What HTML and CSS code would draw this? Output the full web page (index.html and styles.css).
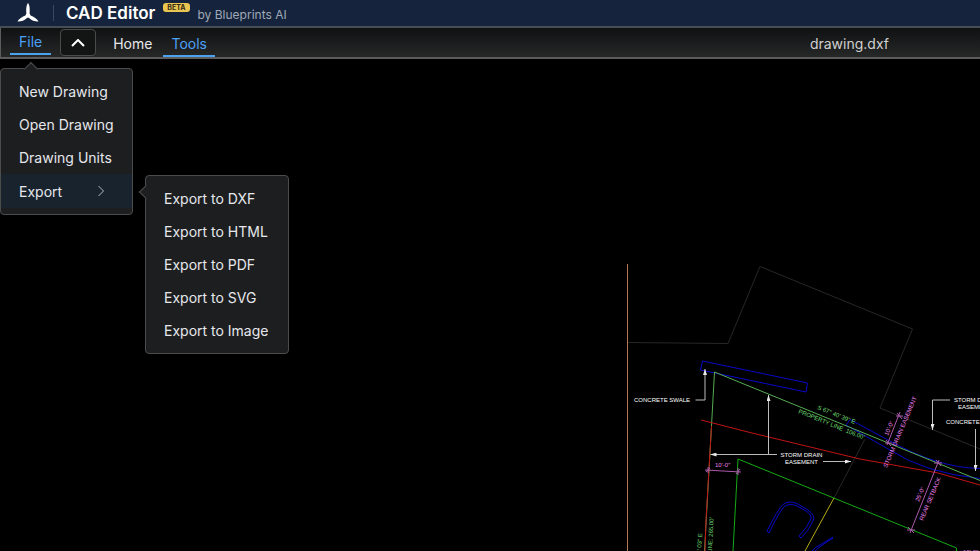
FILE: index.html
```
<!DOCTYPE html>
<html lang="en">
<head>
<meta charset="utf-8">
<meta name="viewport" content="width=device-width, initial-scale=1">
<title>CAD Editor</title>
<link rel="stylesheet" href="styles.css">
</head>
<body>
<header class="brand">
  <svg class="logo" viewBox="0 0 22 20" aria-hidden="true">
    <path d="M11 0C12.5 2 13 5 12.6 10.5L13.6 12.6C17.5 14.2 20.3 16 21.5 18.6C18 18.8 14.8 17.6 11.8 14.8H10.2C7.2 17.6 4 18.8.5 18.6C1.7 16 4.5 14.2 8.4 12.6L9.4 10.5C9 5 9.5 2 11 0Z"/>
  </svg>
  <h1 class="title">CAD Editor</h1>
  <span class="beta">BETA</span>
  <span class="byline">by Blueprints AI</span>
</header>
<nav class="toolbar">
  <div class="file">
    <button class="tab tab-file active" type="button">File</button>
    <div class="menu file-menu">
      <button class="item" type="button">New Drawing</button>
      <button class="item" type="button">Open Drawing</button>
      <button class="item" type="button">Drawing Units</button>
      <div class="export">
        <button class="item selected" type="button">Export
          <svg class="arrow" viewBox="0 0 8 12" aria-hidden="true"><path d="M1.5 1L6.5 6L1.5 11"/></svg>
        </button>
        <div class="menu export-menu">
          <button class="item" type="button">Export to DXF</button>
          <button class="item" type="button">Export to HTML</button>
          <button class="item" type="button">Export to PDF</button>
          <button class="item" type="button">Export to SVG</button>
          <button class="item" type="button">Export to Image</button>
        </div>
      </div>
    </div>
  </div>
  <button class="collapse" type="button" aria-label="Collapse toolbar">
    <svg viewBox="0 0 14 8" aria-hidden="true"><path d="M1 7L7 1L13 7"/></svg>
  </button>
  <button class="tab" type="button">Home</button>
  <button class="tab active" type="button">Tools</button>
  <span class="filename">drawing.dxf</span>
</nav>
<main class="canvas">
  <svg class="drawing" viewBox="620 258 360 293" role="img" aria-label="Site plan">
    <defs>
      <marker id="tip" viewBox="0 0 6 4" refX="6" refY="2" markerWidth="6" markerHeight="4" markerUnits="userSpaceOnUse" orient="auto"><path d="M0 0L6 2L0 4Z" fill="#e8e8e8"/></marker>
    </defs>
    <g class="faint">
      <path d="M628 342.500L728 343.500L760 266.500L912.500 329L880 408L980 449"/>
      <path d="M865 439L834 498"/>
    </g>
    <path class="boundary" d="M627.500 264V551"/>
    <g class="blue">
      <path d="M702.500 361L807.500 383L806 392L700.500 370Z"/>
      <path d="M846 425L850 419.500L888 440Q938 468 980 468.500"/>
      <path d="M846 425L890 450Q925 473 980 478.500"/>
      <path d="M767 531Q778 509 783 504.500Q789 500 797 503.500L808 510Q816 516 813 521Q808 532 801 538L799 536Q807 528 811 519Q812 515 806 511L796 505.500Q788 503 784 507Q779 512 769 533Z"/>
      <path d="M812 551Q815 547 820 545L833 537M815 551Q820 546 833 538"/>
    </g>
    <path class="property" d="M704.500 551L714.500 372L980 480.500"/>
    <path class="green" d="M733 551L738 459L956.500 548V551"/>
    <path class="yellow" d="M834 498L805 551"/>
    <g class="red">
      <path d="M701 420L752 433L860 459L938 473L980 485"/>
      <path d="M711.500 426L706 520L705 551"/>
    </g>
    <g class="leader">
      <path d="M695.500 400H705V369" marker-end="url(#tip)"/>
      <path d="M768.500 454.500V395" marker-end="url(#tip)"/>
      <path d="M777 454.500H710.500" marker-end="url(#tip)"/>
      <path d="M823 461.500H851" marker-end="url(#tip)"/>
      <path d="M950 400H932.500V430" marker-end="url(#tip)"/>
      <path d="M975.500 429V471" marker-end="url(#tip)"/>
    </g>
    <g class="pink-line">
      <path d="M705 470L741 472M708 467V473M706 472L710 468M738 468V475M736 474L740 469"/>
      <path d="M900 412L887 445M896 416L903 416M897 413L902 419M885 443H892M886 440L891 446"/>
      <path d="M939 460L910 533M934 463H942M936 460L941 466M907 530H915M908 527L914 533"/>
    </g>
    <g class="white-text">
      <text x="634" y="402">CONCRETE SWALE</text>
      <text x="801.500" y="457" text-anchor="middle">STORM DRAIN</text>
      <text x="801.500" y="464" text-anchor="middle">EASEMENT</text>
      <text x="954" y="402">STORM DRAIN</text>
      <text x="958" y="409">EASEMENT</text>
      <text x="946" y="423.500">CONCRETE</text>
    </g>
    <g class="green-text">
      <text transform="translate(817 409) rotate(22)">S 67° 40' 39" E</text>
      <text transform="translate(798 413) rotate(22)">PROPERTY LINE&#160; 106.00'</text>
      <text transform="translate(700 574) rotate(-87)">N 22° 03' 03" E</text>
      <text transform="translate(710 588) rotate(-87)">PROPERTY LINE: 265.00'</text>
    </g>
    <g class="pink-text">
      <text x="715" y="467">10'-0"</text>
      <text transform="translate(888 436) rotate(-67)">10'-0"</text>
      <text transform="translate(887 468) rotate(-67)">STORM DRAIN EASEMENT</text>
      <text transform="translate(919 502) rotate(-67)">25'-0"</text>
      <text transform="translate(923 521) rotate(-67)">REAR SETBACK</text>
    </g>
    <text class="pink-text" x="963" y="554">10'-0"</text>
  </svg>
</main>
</body>
</html>
```
FILE: styles.css
```
* {
  box-sizing: border-box;
}

body {
  margin: 0;
  min-height: 100vh;
  display: flex;
  flex-direction: column;
  background: #000;
  color: #e6e8ec;
  font-family: Inter, "Liberation Sans", sans-serif;
  font-size: 14px;
  overflow: hidden;
}

button {
  margin: 0;
  padding: 0;
  border: 0;
  background: none;
  color: inherit;
  font: inherit;
}

.brand {
  height: 28px;
  display: flex;
  align-items: center;
  padding-left: 17px;
  background: #15243c;
  border-bottom: 2px solid #484d55;
}

.logo {
  width: 22px;
  height: 20px;
  fill: #fff;
}

.title {
  margin: 0 0 0 14px;
  padding-left: 12px;
  border-left: 1px solid #3a4960;
  color: #fff;
  font-size: 17px;
  font-weight: 600;
  line-height: 16px;
}

.beta {
  align-self: flex-start;
  margin: 3px 8px 0;
  padding: 0 4px;
  border-radius: 3px;
  background: #eac54f;
  color: #332c18;
  font-size: 7px;
  font-weight: 700;
  line-height: 9px;
}

.byline {
  padding-top: 3px;
  color: #a0a8b8;
  font-size: 12px;
}

.toolbar {
  height: 31px;
  display: flex;
  align-items: flex-end;
  padding-left: 9px;
  background: linear-gradient(#101112, #262727);
  border-bottom: 2px solid #5c5c5c;
  border-left: 1px solid #5c5c5c;
}

.file {
  position: relative;
  align-self: flex-start;
  margin-right: 9px;
}

.tab {
  height: 25px;
  margin-right: 3px;
  padding: 0 8px;
  border-bottom: 2px solid transparent;
  line-height: 22px;
}

.tab-file {
  display: block;
  height: 27px;
  margin: 0;
  padding: 2px 9px 0;
}

.active {
  border-color: #4ba3f0;
  color: #4ba0f8;
}

.collapse {
  align-self: flex-start;
  width: 36px;
  height: 27px;
  margin-top: 1px;
  margin-right: 9px;
  border: 1px solid #4a4a4a;
  border-radius: 4px;
  background: #131414;
}

.collapse svg {
  display: block;
  width: 14px;
  height: 8px;
  margin: 0 auto;
  fill: none;
  stroke: #fff;
  stroke-width: 2;
}

.filename {
  margin: 0 91px 0 auto;
  color: #d0d0d0;
  line-height: 26px;
}

.menu {
  position: absolute;
  z-index: 2;
  border: 1px solid #4c4c4d;
  border-radius: 4px;
  background: #1d1e20;
}

.menu::before {
  content: "";
  position: absolute;
  width: 9px;
  height: 9px;
  border: 1px solid #4c4c4d;
  border-right: 0;
  border-bottom: 0;
  background: #1d1e20;
}

.file-menu {
  top: 40px;
  left: -10px;
  width: 133px;
  padding: 6px 0;
}

.file-menu::before {
  top: -5px;
  left: 25px;
  transform: rotate(45deg);
}

.export {
  position: relative;
}

.export-menu {
  top: 1px;
  left: 144px;
  width: 144px;
  padding: 6px 0;
}

.export-menu::before {
  top: 11px;
  left: -5px;
  transform: rotate(-45deg);
}

.item {
  display: flex;
  align-items: center;
  width: 100%;
  height: 33px;
  padding: 0 18px;
  white-space: nowrap;
}

.selected {
  justify-content: space-between;
  height: 34px;
  padding-right: 27px;
  background: #18232d;
}

.arrow {
  width: 8px;
  height: 12px;
  fill: none;
  stroke: #b5b9bf;
  stroke-width: 1;
}

.canvas {
  flex: 1;
  display: flex;
  align-items: flex-end;
  justify-content: flex-end;
}

.drawing {
  width: 360px;
  height: 293px;
  fill: none;
  font-family: "Liberation Sans", sans-serif;
  font-size: 6px;
}

.faint { stroke: #272727; }
.boundary { stroke: #b87a52; }
.blue { stroke: #0808c8; }
.property { stroke: #55ad55; }
.green { stroke: #13aa13; }
.yellow { stroke: #b5ab18; }
.red { stroke: #c01414; }
.leader { stroke: #bcbcbc; }
.pink-line { stroke: #ad5aad; }
.white-text { fill: #fff; }
.green-text { fill: #70df70; }
.pink-text { fill: #ee80ee; }
```
